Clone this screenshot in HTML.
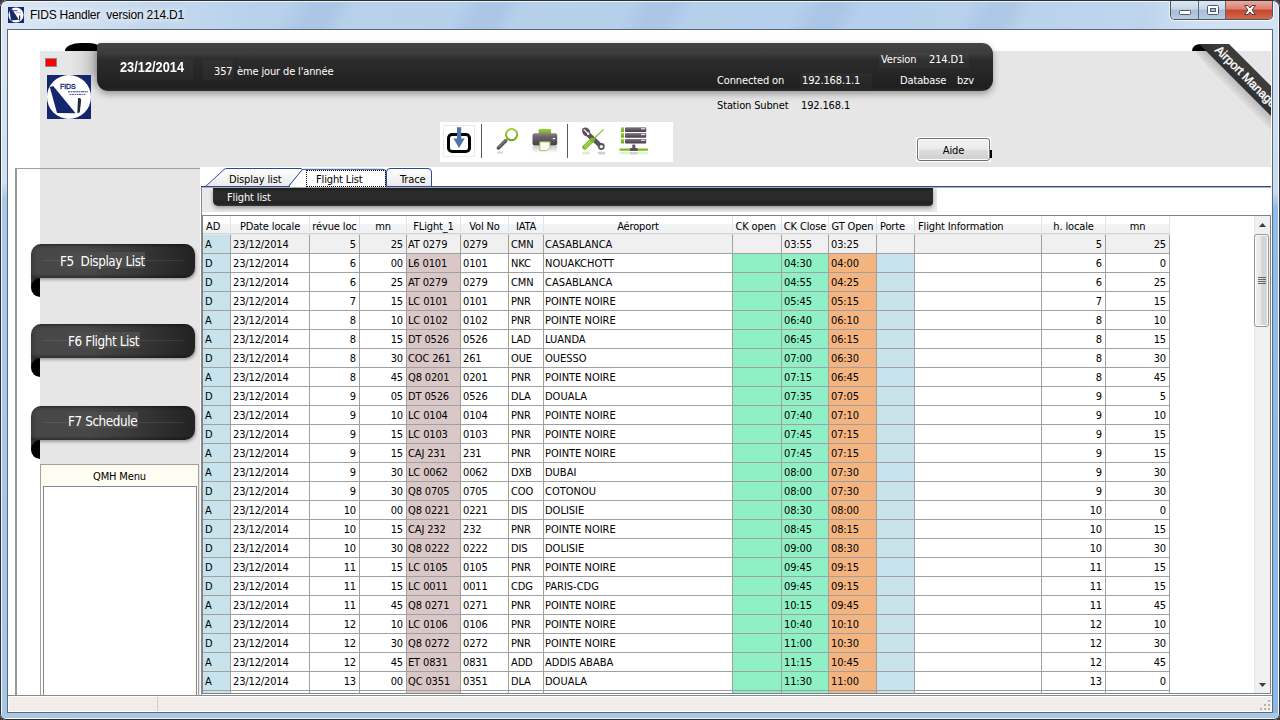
<!DOCTYPE html>
<html lang="fr"><head><meta charset="utf-8"><title>FIDS Handler version 214.D1</title>
<style>
*{box-sizing:border-box}
html,body{margin:0;padding:0}
body{width:1280px;height:720px;overflow:hidden;position:relative;background:#3a3a3a;
 font-family:"DejaVu Sans Condensed","Liberation Sans",sans-serif;font-size:11px;color:#000;letter-spacing:-.14px}
.abs{position:absolute}
/* window frame */
#frame{position:absolute;left:0;top:0;width:1280px;height:720px;border-radius:7px 7px 6px 6px;
 background:linear-gradient(90deg,#dbe7f4 0px,#c9dcf0 120px,#b7d1ec 260px,#b5d0ec 900px,#bed5ee 1140px,#d0e0f2 1200px,#d2e2f3 1280px);
 box-shadow:inset 0 0 0 1px #2b2f36, inset 0 0 0 2px rgba(255,255,255,.75)}
#tstreak{left:120px;top:2px;width:1050px;height:27px;background:repeating-linear-gradient(118deg,rgba(80,120,175,0) 0,rgba(80,120,175,.1) 22px,rgba(80,120,175,.1) 40px,rgba(80,120,175,0) 58px,rgba(80,120,175,0) 150px);-webkit-mask-image:linear-gradient(90deg,transparent 0,#000 12%,#000 85%,transparent 100%);mask-image:linear-gradient(90deg,transparent 0,#000 12%,#000 85%,transparent 100%)}
#frameL{left:2px;top:30px;width:5px;height:683px;background:linear-gradient(180deg,#d8e6f4 0,#d0e0f1 152px,#a9c9e8 168px,#a7c7e7 100%)}
#frameR{left:1273px;top:30px;width:5px;height:683px;background:linear-gradient(180deg,#cfe0f2 0,#cadcf0 162px,#90bcec 178px,#8ab8ea 100%)}
#frameB{left:2px;top:713px;width:1276px;height:5px;background:#a9c8e6}
#client{left:7px;top:29px;width:1266px;height:684px;background:#fff;border:1px solid #5c6874}
#title{left:30px;top:8px;letter-spacing:-.22px;font-family:"Liberation Sans",sans-serif;font-size:12px;line-height:15px;white-space:pre;color:#000;
 text-shadow:0 0 6px #fff,0 0 10px #fff}
/* caption buttons */
#capbtns{left:1170px;top:1px;width:103px;height:19px;border:1px solid #4a5560;border-top:none;border-radius:0 0 5px 5px;overflow:hidden;
 box-shadow:-1px 1px 0 rgba(255,255,255,.55),1px 1px 0 rgba(255,255,255,.55)}
#capbtns div{position:absolute;top:0;height:18px}
#bmin{left:0;width:28px;background:linear-gradient(180deg,#dde8f3 0,#c6d6e8 45%,#a9bdd6 50%,#b9cbe0 100%);border-right:1px solid #5c6874}
#bmax{left:28px;width:27px;background:linear-gradient(180deg,#dde8f3 0,#c6d6e8 45%,#a9bdd6 50%,#b9cbe0 100%);border-right:1px solid #5c6874}
#bclose{left:55px;width:47px;background:linear-gradient(180deg,#e9a99b 0,#d9816f 45%,#c8452c 50%,#d36a4b 100%)}
/* header */
#hpanel{left:40px;top:51px;width:1231px;height:116px;background:#e6e6e6}
#lpanelbg{left:40px;top:167px;width:160px;height:528px;background:#e6e6e6}
.blackbar{background:linear-gradient(180deg,#444 0,#3c3c3c 22%,#2c2c2c 34%,#272727 60%,#1f1f1f 94%,#2e2e2e 100%);color:#fff}
#hbar{left:97px;top:43px;width:896px;height:48px;border-radius:4px 11px 11px 11px;box-shadow:0 3px 7px rgba(0,0,0,.35)}
#hcurl{left:65px;top:43px;width:36px;height:8px;background:#000;border-radius:16px 12px 0 0 / 8px 6px 0 0}
#hcurlsh{left:70px;top:51px;width:27px;height:40px;background:linear-gradient(90deg,rgba(0,0,0,0) 0,rgba(0,0,0,.04) 40%,rgba(0,0,0,.2) 100%);-webkit-mask-image:linear-gradient(180deg,#000 0,#000 50%,transparent 100%)}
.lbl{position:absolute;white-space:pre;color:#fff;margin-top:1px}
.lblbg{background:rgba(255,255,255,.03)}
#redsq{left:45px;top:58px;width:12px;height:9px;background:#fe0000;border:1px solid #8a8a8a}
/* toolbar */
#tbar{left:440px;top:122px;width:233px;height:40px;background:#fff}
.tsep{position:absolute;top:124px;width:1px;height:34px;background:#5a5a5a}
/* Aide */
#aide{left:916px;top:137px;width:75px;height:25px;background:#fff}
#aidebtn{left:917px;top:138px;width:73px;height:23px;border:1px solid #707070;border-radius:3px;
 background:linear-gradient(180deg,#f2f2f2 0,#ebebeb 48%,#dddddd 52%,#cfcfcf 100%);box-shadow:inset 0 0 0 1px #fcfcfc;
 text-align:center;line-height:23px;font-size:11px}
/* nav buttons */
.nav{position:absolute;left:31px;width:164px;height:34px;border-radius:10px 10px 10px 0;
 background:linear-gradient(90deg,#3c3c3c 0,#474747 4%,#484848 35%,#3a3a3a 62%,#292929 88%,#222 100%);box-shadow:1px 2px 3px rgba(0,0,0,.3)}
.nav:before{content:"";position:absolute;left:0;top:0;right:0;bottom:0;border-radius:10px 10px 10px 0;background:linear-gradient(180deg,rgba(0,0,0,.4) 0,rgba(0,0,0,.08) 8%,rgba(0,0,0,0) 15%,rgba(0,0,0,0) 88%,rgba(0,0,0,.35) 100%)}
.navline{position:absolute;left:13px;right:10px;top:16px;height:1px;background:rgba(255,255,255,.09)}
.navcurlbg{position:absolute;left:31px;width:9px;height:10px;background:#3c3c3c}
.navcurl{position:absolute;left:31px;width:9px;height:19px;background:#000;border-radius:9px 0 0 9px / 9.5px 0 0 9.5px}
.navlbl{position:absolute;top:8px;height:16px;line-height:19px;background:#4c4c4c;color:#fff;font-size:13.4px;letter-spacing:-.42px;white-space:pre;padding:0 0 0 0}
/* QMH */
#qmh{left:40px;top:464px;width:159px;height:231px;background:#fffcf1;border:1px solid #a0a0a0;border-bottom:none}
#qmhlbl{left:41px;top:469.500px;width:157px;text-align:center;font-size:11px;line-height:14px}
#qmhlist{left:43px;top:486px;width:154px;height:209px;background:#fff;border:1px solid #828790;border-bottom:none}
/* tabs */
#tabline{left:201px;top:186px;width:1070px;height:1px;background:#2b4c9b}
#tabline2{left:201px;top:187px;width:1070px;height:1px;background:#b0b0b0}
#tableft{left:201px;top:187px;width:1px;height:508px;background:#8a8a8a}
#flpanel{left:202px;top:188px;width:735px;height:24px;background:#e9e9e9}
#flbar{left:213px;top:188px;width:720px;height:18px;border-radius:0 0 4px 5px;box-shadow:0 2px 4px rgba(0,0,0,.35);
 background:linear-gradient(180deg,#1c1c1c 0,#2b2b2b 20%,#2a2a2a 60%,#222 86%,#333 100%)}
/* grid */
.grid{position:absolute;left:203px;top:216px;width:1067px;height:477px;background:#fff;overflow:hidden}
#gridborder{left:202px;top:215px;width:1069px;height:479px;border:1px solid #7a838e}
.ghead{position:absolute;left:0;top:0;width:967px;height:18px;background:linear-gradient(180deg,#fff 0,#fff 45%,#f3f4f6 50%,#f0f1f3 100%);border-bottom:1px solid #d5d5d5}
.hc{position:absolute;top:0;height:18px;line-height:20px;white-space:nowrap;border-right:1px solid #e3e4e6;text-align:center;padding-top:1px}
.hc.hl{text-align:left;padding-left:3px}
.hc.hl2{text-align:left;padding-left:2.500px}
.row{position:absolute;left:0;width:967px;height:19px}
.row .c{position:absolute;top:0;height:20px;border:1px solid #a0a0a0;border-left:none;border-bottom:none;border-top:1px solid #a0a0a0;line-height:20px;padding:0 2px 0 2px;white-space:nowrap;overflow:hidden;background:#fff}
.row .c.ap{padding-left:1px;letter-spacing:0}
.row .c.r{text-align:right;padding-right:3px}
.row .cAD{background:#c9e3ed}
.row .cFL{background:#d9c8c7;padding-left:1px}
.row .cCK{background:#8ff0c6}
.row .cGT{background:#f4b47f}
.row .cPO{background:#c9e3ed}
.row.sel .c{background:#f0f0f0;border-top-color:#e6e6e6}
.row.sel .cAD{background:#c9e3ed}
/* scrollbar */
#sb{left:1254px;top:216px;width:16px;height:477px;background:#f0f0f0;border-left:1px solid #e8e8e8}
#sbthumb{left:1254px;top:234px;width:15px;height:93px;border:1px solid #979797;border-radius:3px;background:linear-gradient(90deg,#f3f3f3 0,#e6e6e6 45%,#d4d4d4 55%,#d8d8d8 100%);box-shadow:inset 0 0 0 1px #fbfbfb}
/* status */
#statline{left:8px;top:695px;width:1264px;height:1px;background:#8a8a8a}
#status{left:9px;top:697px;width:1262px;height:14px;background:#f0edeb}
#statsep{left:157px;top:697px;width:1px;height:14px;background:#d0cdcb}
/* ribbon */
#ribclip{left:1185px;top:40px;width:86px;height:90px;overflow:hidden}

</style></head>
<body>
<div id="frame"></div>
<div class="abs" id="tstreak"></div>
<div class="abs" id="frameL"></div><div class="abs" id="frameR"></div><div class="abs" id="frameB"></div>
<!-- title bar -->
<svg class="abs" style="left:8px;top:7px" width="16" height="16" viewBox="0 0 16 16">
 <rect width="16" height="16" fill="#16286f"/><circle cx="8" cy="8" r="7.6" fill="#fff"/>
 <path d="M1.5 3.2 L4 2 L10.8 12.8 L3 13.5 Z" fill="#16286f"/><rect x="11" y="8.5" width="1.2" height="5" fill="#333"/>
 <rect x="4.5" y="3" width="5" height="1.2" fill="#5a6aa8"/><rect x="8" y="5" width="5" height="1.4" fill="#c5cbe3"/>
</svg>
<div class="abs" id="title">FIDS Handler  version 214.D1</div>
<div class="abs" id="capbtns">
 <div id="bmin"><svg width="28" height="19"><rect x="8.500" y="9.500" width="11" height="4" rx="1" fill="#fff" stroke="#50596a"/></svg></div>
 <div id="bmax"><svg width="27" height="19"><rect x="8.500" y="4.500" width="11" height="9" rx="1" fill="#fff" stroke="#50596a"/><rect x="11.500" y="7.500" width="5" height="3" fill="#a9bdd6" stroke="#50596a"/></svg></div>
 <div id="bclose"><svg width="47" height="19"><path d="M18.500 4.500 L22 4.500 L24 7 L26 4.500 L29.500 4.500 L26 9 L29.500 13.500 L26 13.500 L24 11 L22 13.500 L18.500 13.500 L22 9 Z" fill="#fff" stroke="#4c3c48" stroke-width="1" stroke-linejoin="round"/></svg></div>
</div>
<div class="abs" id="client"></div>
<!-- header -->
<div class="abs" id="hpanel"></div>
<div class="abs" id="lpanelbg"></div>
<div class="abs" id="hcurlsh"></div>
<div class="abs" id="hcurl"></div>
<div class="abs blackbar" id="hbar"></div>
<div class="lbl lblbg" style="left:120px;top:58px;width:73px;height:21px"></div>
<div class="lbl" style="left:120px;top:57px;font:bold 15px/18px 'Liberation Sans',sans-serif;letter-spacing:0;transform:scaleX(.853);transform-origin:0 0" id="tdate">23/12/2014</div>
<div class="lbl lblbg" style="left:203px;top:59px;width:30px;height:20px"></div>
<div class="lbl" style="left:214px;top:64px;line-height:14px" id="tjour0">357</div>
<div class="lbl" style="left:237px;top:64px;line-height:14px" id="tjour">ème jour de l'année</div>
<div class="lbl lblbg" style="left:879px;top:52px;width:90px;height:15px"></div>
<div class="lbl" style="left:881px;top:52px;line-height:14px" id="tver">Version</div>
<div class="lbl" style="left:929px;top:52px;line-height:14px" id="tverv">214.D1</div>
<div class="lbl" style="left:717px;top:73px;line-height:14px" id="tcon">Connected on</div>
<div class="lbl lblbg" style="left:800px;top:72px;width:72px;height:16px"></div>
<div class="lbl" style="left:802px;top:73px;line-height:14px" id="tip">192.168.1.1</div>
<div class="lbl" style="left:900px;top:73px;line-height:14px" id="tdb">Database</div>
<div class="lbl" style="left:957px;top:73px;line-height:14px" id="tbzv">bzv</div>
<div class="lbl" style="left:717px;top:98px;line-height:14px;color:#000" id="tsub">Station Subnet</div>
<div class="lbl" style="left:801px;top:98px;line-height:14px;color:#000" id="tsubv">192.168.1</div>
<div class="abs" id="redsq"></div>
<!-- logo -->
<svg class="abs" style="left:47px;top:75px" width="44" height="44" viewBox="0 0 44 44">
 <rect width="44" height="44" fill="#13266e"/>
 <circle cx="22" cy="22" r="22" fill="#fff"/>
 <path d="M2.800 12 L6.200 10.900 L28.600 38.200 L10 37.900 Z" fill="#13266e"/>
 <path d="M31 23 Q34.200 22.600 34.200 25 L32.800 37.300 L30.300 38.300 Z" fill="#262b36"/>
 <text x="13" y="13.800" font-family="Liberation Sans,sans-serif" font-size="7" fill="#13266e" stroke="#13266e" stroke-width=".3" textLength="15.500" lengthAdjust="spacingAndGlyphs">FIDS</text>
 <path d="M21 16.800 H41" stroke="#2c3b80" stroke-width="1.100" stroke-dasharray="2.200 .5 1.400 .6 3 .5"/>
 <path d="M22.500 19.400 H38.500" stroke="#4a5796" stroke-width="1" stroke-dasharray="1.800 .5 2.600 .6 1.200 .5"/>
</svg>
<!-- toolbar -->
<div class="abs" id="tbar"></div>
<div class="tsep" style="left:481px"></div><div class="tsep" style="left:567px"></div>
<!--ICONS_START-->
<svg class="abs" style="left:440px;top:122px" width="233" height="40" viewBox="440 122 233 40">
 <defs>
  <linearGradient id="gG" x1="0" y1="0" x2="0" y2="1"><stop offset="0" stop-color="#9ad23a"/><stop offset="1" stop-color="#6aa516"/></linearGradient>
  <linearGradient id="gP" x1="0" y1="0" x2="0" y2="1"><stop offset="0" stop-color="#8d858f"/><stop offset=".25" stop-color="#6f6672"/><stop offset="1" stop-color="#463d49"/></linearGradient>
  <linearGradient id="gRf" x1="0" y1="0" x2="0" y2="1"><stop offset="0" stop-color="#8a8a8a" stop-opacity=".45"/><stop offset="1" stop-color="#8a8a8a" stop-opacity="0"/></linearGradient>
  <linearGradient id="gRg" x1="0" y1="0" x2="0" y2="1"><stop offset="0" stop-color="#8cc63f" stop-opacity=".45"/><stop offset="1" stop-color="#8cc63f" stop-opacity="0"/></linearGradient>
 </defs>
 <!-- download -->
 <rect x="443.500" y="125.500" width="31" height="31" fill="#fff" stroke="#ebebed"/>
 <rect x="448.500" y="134.500" width="21" height="17" rx="3.600" ry="3.600" fill="none" stroke="#000" stroke-width="3"/>
 <path d="M457 127.300 L461.200 127.300 L461.200 138.400 L464.600 138.400 L459.100 148 L453.400 138.400 L457 138.400 Z" fill="#4e73a7"/>
 <!-- magnifier -->
 <path d="M505.800 140.300 L507.600 138.200 L509 139.600 L506.900 141.300 Z" fill="#76b21d"/>
 <line x1="505.400" y1="140.900" x2="498.400" y2="147.900" stroke="#5b525e" stroke-width="3.600" stroke-linecap="round"/>
 <line x1="505.200" y1="140.500" x2="498.800" y2="146.900" stroke="#9a929c" stroke-width="1" stroke-linecap="round"/>
 <circle cx="511.600" cy="134.600" r="5.600" fill="#fff" stroke="url(#gG)" stroke-width="2"/>
 <ellipse cx="500" cy="152.600" rx="3.200" ry="1.300" fill="#999" opacity=".35"/>
 <!-- printer -->
 <rect x="538.600" y="129" width="12.500" height="5" rx="1" fill="url(#gG)"/>
 <rect x="532.500" y="133.200" width="24.700" height="12.200" rx="2.200" fill="url(#gP)"/>
 <rect x="552.800" y="138" width="2.300" height="1.200" fill="#fff"/>
 <rect x="532.500" y="146" width="24.700" height="7" fill="url(#gRf)"/>
 <path d="M539.900 141.900 L549.900 141.900 L549.900 147.600 L546.600 150.600 L539.900 150.600 Z" fill="#fff" stroke="#9ad04e" stroke-width="1"/>
 <!-- tools -->
 <line x1="589" y1="135" x2="601.400" y2="146.600" stroke="#5b525e" stroke-width="4.600" stroke-linecap="round"/>
 <circle cx="601.300" cy="146.500" r="3.400" fill="#5b525e"/>
 <circle cx="601.400" cy="146.600" r="1.600" fill="#fff"/>
 <path d="M582.600 128.200 Q586 126.600 588.800 129 Q591 131 590.300 134 L592.500 136.500 L589.500 139 L587 136.500 Q583.500 136 582.300 132.500 Q581.800 130 582.600 128.200 Z" fill="#5b525e"/>
 <path d="M583.800 129.400 L588.200 133.700" stroke="#fff" stroke-width="1.100"/>
 <circle cx="588.200" cy="133.800" r="1.200" fill="#fff"/>
 <line x1="603.300" y1="129.600" x2="592.500" y2="140" stroke="#86c22f" stroke-width="1.300" stroke-linecap="round"/>
 <line x1="592.400" y1="140.100" x2="584.600" y2="147.200" stroke="#7ab81c" stroke-width="4.800" stroke-linecap="round"/>
 <line x1="592" y1="139.200" x2="584" y2="146.500" stroke="#e9f6cf" stroke-width=".7"/>
 <line x1="593.200" y1="140.600" x2="585.200" y2="147.900" stroke="#e9f6cf" stroke-width=".7"/>
 <circle cx="592" cy="140" r="2.300" fill="#7ab81c"/>
 <ellipse cx="586" cy="153" rx="4" ry="1.500" fill="#8cc63f" opacity=".3"/>
 <ellipse cx="601.500" cy="153" rx="4" ry="1.500" fill="#777" opacity=".35"/>
 <!-- server -->
 <g>
  <rect x="620.900" y="127.300" width="3.200" height="4.700" rx=".8" fill="url(#gG)"/><rect x="625" y="127.300" width="21.200" height="4.700" rx=".8" fill="url(#gP)"/><rect x="641" y="128.200" width="4" height="1.100" fill="#e8e6e9"/>
  <rect x="620.900" y="133.100" width="3.200" height="4.700" rx=".8" fill="url(#gG)"/><rect x="625" y="133.100" width="21.200" height="4.700" rx=".8" fill="url(#gP)"/><rect x="641" y="134" width="4" height="1.100" fill="#e8e6e9"/>
  <rect x="620.900" y="138.900" width="3.200" height="4.700" rx=".8" fill="url(#gG)"/><rect x="625" y="138.900" width="21.200" height="4.700" rx=".8" fill="url(#gP)"/><rect x="641" y="139.800" width="4" height="1.100" fill="#e8e6e9"/>
  <rect x="632.300" y="144.600" width="3" height="4" fill="#5b525e"/>
  <rect x="619.400" y="148.400" width="28.800" height="2.400" rx="1.200" fill="#7ab81c"/>
  <rect x="630" y="148" width="7.600" height="3" rx=".6" fill="#5b525e"/>
  <rect x="619.400" y="152.500" width="28.800" height="2.300" rx="1" fill="url(#gRg)"/>
  <rect x="630" y="152.500" width="7.600" height="3" fill="url(#gRf)"/>
 </g>
</svg>
<!--ICONS_END-->
<!-- aide -->
<div class="abs" id="aide"></div>
<div class="abs" id="aidebtn">Aide</div>
<div class="abs" style="left:990px;top:150px;width:1.500px;height:8px;background:#000"></div>
<!-- ribbon -->
<svg class="abs" style="left:1185px;top:40px" width="86" height="90" viewBox="0 0 86 90">
 <defs>
  <linearGradient id="rg" x1="0" y1="1" x2="1" y2="0" gradientUnits="objectBoundingBox"><stop offset="0.3" stop-color="#1a1a1a"/><stop offset="0.62" stop-color="#3c3c3c"/></linearGradient>
  <linearGradient id="rs" gradientUnits="userSpaceOnUse" x1="40" y1="30" x2="32" y2="38"><stop offset="0" stop-color="#000" stop-opacity=".2"/><stop offset="1" stop-color="#000" stop-opacity="0"/></linearGradient>
 </defs>
 <path d="M7 11 Q7.500 4 16 4 L24 4 L24 11 Z" fill="#000"/>
 <polygon points="21,11 86,76 86,90 72,90 10,11" fill="url(#rs)"/>
 <polygon points="14,4 44,4 86,46 86,76" fill="url(#rg)"/>
 <text transform="translate(29.3,10.7) rotate(45)" font-family="Liberation Sans,sans-serif" font-size="12.2" fill="#fff" stroke="#fff" stroke-width=".35" id="ribtxt">Airport Manager</text>
</svg>
<!-- left panel -->
<div class="abs" style="left:15px;top:168px;width:185px;height:1px;background:#a0a0a0"></div>
<div class="abs" style="left:15px;top:168px;width:2px;height:527px;background:#9a9a9a"></div>
<div class="navcurlbg" style="top:277px"></div><div class="navcurl" style="top:278px"></div>
<div class="nav" style="top:244px"><div class="navline"></div><div class="navlbl" style="left:29px;width:85px" id="n1">F5  Display List</div></div>
<div class="navcurlbg" style="top:357px"></div><div class="navcurl" style="top:358px"></div>
<div class="nav" style="top:324px"><div class="navline"></div><div class="navlbl" style="left:37px;width:72px" id="n2">F6 Flight List</div></div>
<div class="navcurlbg" style="top:439px"></div><div class="navcurl" style="top:440px"></div>
<div class="nav" style="top:406px"><div class="navline"></div><div class="navlbl" style="left:37px;width:70px;top:6px" id="n3">F7 Schedule</div></div>
<div class="abs" id="qmh"></div>
<div class="abs" id="qmhlbl">QMH Menu</div>
<div class="abs" id="qmhlist"></div>
<!-- tabs -->
<svg class="abs" style="left:200px;top:166px" width="240" height="22" viewBox="0 0 240 22">
 <defs><linearGradient id="tg" x1="0" y1="0" x2="0" y2="1"><stop offset="0" stop-color="#fff"/><stop offset="1" stop-color="#e9e9e9"/></linearGradient></defs>
 <path d="M5.5 20.5 L24 3.500 Q25 2.500 27 2.500 L100 2.500 Q103.500 2.500 102 4.600 L88.500 20.500 Z" fill="url(#tg)" stroke="#2b4c9b" stroke-width="1"/>
 <path d="M88.500 20.500 L101 5 Q102.500 3.300 105 3.300 L183 3.300 Q186 3.300 186 6 L186 20.500 Z" fill="#fff" stroke="#2b4c9b" stroke-width="1"/>
 <path d="M186.500 20.5 L186.500 6 Q186.5 2.5 190 2.5 L228 2.500 Q231.5 2.5 231.5 6 L231.500 20.5 Z" fill="url(#tg)" stroke="#2b4c9b" stroke-width="1"/>
</svg>
<div class="abs" style="left:229px;top:173px;line-height:14px" id="tab1">Display list</div>
<div class="abs" style="left:316px;top:173px;line-height:14px" id="tab2">Flight List</div>
<div class="abs" style="left:400px;top:173px;line-height:14px" id="tab3">Trace</div>
<div class="abs" id="tabline"></div><div class="abs" id="tabline2"></div><div class="abs" id="tableft"></div>
<div class="abs" style="left:290px;top:186px;width:96px;height:1px;background:#fff"></div>
<div class="abs" style="left:306px;top:170px;width:80px;height:17px;border:1px dotted #000"></div>
<div class="abs" id="flpanel"></div>
<div class="abs" id="flbar"></div>
<div class="lbl" style="left:227px;top:190px;line-height:14px" id="tfl">Flight list</div>
<!-- grid -->
<div class="abs" id="gridborder"></div>
<div class="grid">
<div class="ghead">
<div class="hc hl" style="left:0px;width:28px"><span>AD</span></div>
<div class="hc hc" style="left:28px;width:79px"><span>PDate locale</span></div>
<div class="hc hc" style="left:107px;width:50px"><span>révue loc</span></div>
<div class="hc hc" style="left:157px;width:47px"><span>mn</span></div>
<div class="hc hc" style="left:204px;width:54px"><span>FLight_1</span></div>
<div class="hc hc" style="left:258px;width:48px"><span>Vol No</span></div>
<div class="hc hc" style="left:306px;width:35px"><span>IATA</span></div>
<div class="hc hc" style="left:341px;width:189px"><span>Aéroport</span></div>
<div class="hc hl2" style="left:530px;width:49px"><span>CK open</span></div>
<div class="hc hc" style="left:579px;width:47px"><span>CK Close</span></div>
<div class="hc hc" style="left:626px;width:48px"><span>GT Open</span></div>
<div class="hc hl" style="left:674px;width:38px"><span>Porte</span></div>
<div class="hc hl" style="left:712px;width:127px"><span>Flight Information</span></div>
<div class="hc hc" style="left:839px;width:64px"><span>h. locale</span></div>
<div class="hc hc" style="left:903px;width:64px"><span>mn</span></div>
</div>
<div class="row sel" style="top:18px">
<div class="c cAD" style="left:0px;width:28px">A</div>
<div class="c " style="left:28px;width:79px">23/12/2014</div>
<div class="c r" style="left:107px;width:50px">5</div>
<div class="c r" style="left:157px;width:47px">25</div>
<div class="c cFL" style="left:204px;width:54px">AT 0279</div>
<div class="c " style="left:258px;width:48px">0279</div>
<div class="c " style="left:306px;width:35px">CMN</div>
<div class="c ap" style="left:341px;width:189px">CASABLANCA</div>
<div class="c cCK" style="left:530px;width:49px"></div>
<div class="c cCK" style="left:579px;width:47px">03:55</div>
<div class="c cGT" style="left:626px;width:48px">03:25</div>
<div class="c cPO" style="left:674px;width:38px"></div>
<div class="c " style="left:712px;width:127px"></div>
<div class="c r" style="left:839px;width:64px">5</div>
<div class="c r" style="left:903px;width:64px">25</div>
</div>
<div class="row" style="top:37px">
<div class="c cAD" style="left:0px;width:28px">D</div>
<div class="c " style="left:28px;width:79px">23/12/2014</div>
<div class="c r" style="left:107px;width:50px">6</div>
<div class="c r" style="left:157px;width:47px">00</div>
<div class="c cFL" style="left:204px;width:54px">L6 0101</div>
<div class="c " style="left:258px;width:48px">0101</div>
<div class="c " style="left:306px;width:35px">NKC</div>
<div class="c ap" style="left:341px;width:189px">NOUAKCHOTT</div>
<div class="c cCK" style="left:530px;width:49px"></div>
<div class="c cCK" style="left:579px;width:47px">04:30</div>
<div class="c cGT" style="left:626px;width:48px">04:00</div>
<div class="c cPO" style="left:674px;width:38px"></div>
<div class="c " style="left:712px;width:127px"></div>
<div class="c r" style="left:839px;width:64px">6</div>
<div class="c r" style="left:903px;width:64px">0</div>
</div>
<div class="row" style="top:56px">
<div class="c cAD" style="left:0px;width:28px">D</div>
<div class="c " style="left:28px;width:79px">23/12/2014</div>
<div class="c r" style="left:107px;width:50px">6</div>
<div class="c r" style="left:157px;width:47px">25</div>
<div class="c cFL" style="left:204px;width:54px">AT 0279</div>
<div class="c " style="left:258px;width:48px">0279</div>
<div class="c " style="left:306px;width:35px">CMN</div>
<div class="c ap" style="left:341px;width:189px">CASABLANCA</div>
<div class="c cCK" style="left:530px;width:49px"></div>
<div class="c cCK" style="left:579px;width:47px">04:55</div>
<div class="c cGT" style="left:626px;width:48px">04:25</div>
<div class="c cPO" style="left:674px;width:38px"></div>
<div class="c " style="left:712px;width:127px"></div>
<div class="c r" style="left:839px;width:64px">6</div>
<div class="c r" style="left:903px;width:64px">25</div>
</div>
<div class="row" style="top:75px">
<div class="c cAD" style="left:0px;width:28px">D</div>
<div class="c " style="left:28px;width:79px">23/12/2014</div>
<div class="c r" style="left:107px;width:50px">7</div>
<div class="c r" style="left:157px;width:47px">15</div>
<div class="c cFL" style="left:204px;width:54px">LC 0101</div>
<div class="c " style="left:258px;width:48px">0101</div>
<div class="c " style="left:306px;width:35px">PNR</div>
<div class="c ap" style="left:341px;width:189px">POINTE NOIRE</div>
<div class="c cCK" style="left:530px;width:49px"></div>
<div class="c cCK" style="left:579px;width:47px">05:45</div>
<div class="c cGT" style="left:626px;width:48px">05:15</div>
<div class="c cPO" style="left:674px;width:38px"></div>
<div class="c " style="left:712px;width:127px"></div>
<div class="c r" style="left:839px;width:64px">7</div>
<div class="c r" style="left:903px;width:64px">15</div>
</div>
<div class="row" style="top:94px">
<div class="c cAD" style="left:0px;width:28px">A</div>
<div class="c " style="left:28px;width:79px">23/12/2014</div>
<div class="c r" style="left:107px;width:50px">8</div>
<div class="c r" style="left:157px;width:47px">10</div>
<div class="c cFL" style="left:204px;width:54px">LC 0102</div>
<div class="c " style="left:258px;width:48px">0102</div>
<div class="c " style="left:306px;width:35px">PNR</div>
<div class="c ap" style="left:341px;width:189px">POINTE NOIRE</div>
<div class="c cCK" style="left:530px;width:49px"></div>
<div class="c cCK" style="left:579px;width:47px">06:40</div>
<div class="c cGT" style="left:626px;width:48px">06:10</div>
<div class="c cPO" style="left:674px;width:38px"></div>
<div class="c " style="left:712px;width:127px"></div>
<div class="c r" style="left:839px;width:64px">8</div>
<div class="c r" style="left:903px;width:64px">10</div>
</div>
<div class="row" style="top:113px">
<div class="c cAD" style="left:0px;width:28px">A</div>
<div class="c " style="left:28px;width:79px">23/12/2014</div>
<div class="c r" style="left:107px;width:50px">8</div>
<div class="c r" style="left:157px;width:47px">15</div>
<div class="c cFL" style="left:204px;width:54px">DT 0526</div>
<div class="c " style="left:258px;width:48px">0526</div>
<div class="c " style="left:306px;width:35px">LAD</div>
<div class="c ap" style="left:341px;width:189px">LUANDA</div>
<div class="c cCK" style="left:530px;width:49px"></div>
<div class="c cCK" style="left:579px;width:47px">06:45</div>
<div class="c cGT" style="left:626px;width:48px">06:15</div>
<div class="c cPO" style="left:674px;width:38px"></div>
<div class="c " style="left:712px;width:127px"></div>
<div class="c r" style="left:839px;width:64px">8</div>
<div class="c r" style="left:903px;width:64px">15</div>
</div>
<div class="row" style="top:132px">
<div class="c cAD" style="left:0px;width:28px">D</div>
<div class="c " style="left:28px;width:79px">23/12/2014</div>
<div class="c r" style="left:107px;width:50px">8</div>
<div class="c r" style="left:157px;width:47px">30</div>
<div class="c cFL" style="left:204px;width:54px">COC 261</div>
<div class="c " style="left:258px;width:48px">261</div>
<div class="c " style="left:306px;width:35px">OUE</div>
<div class="c ap" style="left:341px;width:189px">OUESSO</div>
<div class="c cCK" style="left:530px;width:49px"></div>
<div class="c cCK" style="left:579px;width:47px">07:00</div>
<div class="c cGT" style="left:626px;width:48px">06:30</div>
<div class="c cPO" style="left:674px;width:38px"></div>
<div class="c " style="left:712px;width:127px"></div>
<div class="c r" style="left:839px;width:64px">8</div>
<div class="c r" style="left:903px;width:64px">30</div>
</div>
<div class="row" style="top:151px">
<div class="c cAD" style="left:0px;width:28px">A</div>
<div class="c " style="left:28px;width:79px">23/12/2014</div>
<div class="c r" style="left:107px;width:50px">8</div>
<div class="c r" style="left:157px;width:47px">45</div>
<div class="c cFL" style="left:204px;width:54px">Q8 0201</div>
<div class="c " style="left:258px;width:48px">0201</div>
<div class="c " style="left:306px;width:35px">PNR</div>
<div class="c ap" style="left:341px;width:189px">POINTE NOIRE</div>
<div class="c cCK" style="left:530px;width:49px"></div>
<div class="c cCK" style="left:579px;width:47px">07:15</div>
<div class="c cGT" style="left:626px;width:48px">06:45</div>
<div class="c cPO" style="left:674px;width:38px"></div>
<div class="c " style="left:712px;width:127px"></div>
<div class="c r" style="left:839px;width:64px">8</div>
<div class="c r" style="left:903px;width:64px">45</div>
</div>
<div class="row" style="top:170px">
<div class="c cAD" style="left:0px;width:28px">D</div>
<div class="c " style="left:28px;width:79px">23/12/2014</div>
<div class="c r" style="left:107px;width:50px">9</div>
<div class="c r" style="left:157px;width:47px">05</div>
<div class="c cFL" style="left:204px;width:54px">DT 0526</div>
<div class="c " style="left:258px;width:48px">0526</div>
<div class="c " style="left:306px;width:35px">DLA</div>
<div class="c ap" style="left:341px;width:189px">DOUALA</div>
<div class="c cCK" style="left:530px;width:49px"></div>
<div class="c cCK" style="left:579px;width:47px">07:35</div>
<div class="c cGT" style="left:626px;width:48px">07:05</div>
<div class="c cPO" style="left:674px;width:38px"></div>
<div class="c " style="left:712px;width:127px"></div>
<div class="c r" style="left:839px;width:64px">9</div>
<div class="c r" style="left:903px;width:64px">5</div>
</div>
<div class="row" style="top:189px">
<div class="c cAD" style="left:0px;width:28px">A</div>
<div class="c " style="left:28px;width:79px">23/12/2014</div>
<div class="c r" style="left:107px;width:50px">9</div>
<div class="c r" style="left:157px;width:47px">10</div>
<div class="c cFL" style="left:204px;width:54px">LC 0104</div>
<div class="c " style="left:258px;width:48px">0104</div>
<div class="c " style="left:306px;width:35px">PNR</div>
<div class="c ap" style="left:341px;width:189px">POINTE NOIRE</div>
<div class="c cCK" style="left:530px;width:49px"></div>
<div class="c cCK" style="left:579px;width:47px">07:40</div>
<div class="c cGT" style="left:626px;width:48px">07:10</div>
<div class="c cPO" style="left:674px;width:38px"></div>
<div class="c " style="left:712px;width:127px"></div>
<div class="c r" style="left:839px;width:64px">9</div>
<div class="c r" style="left:903px;width:64px">10</div>
</div>
<div class="row" style="top:208px">
<div class="c cAD" style="left:0px;width:28px">D</div>
<div class="c " style="left:28px;width:79px">23/12/2014</div>
<div class="c r" style="left:107px;width:50px">9</div>
<div class="c r" style="left:157px;width:47px">15</div>
<div class="c cFL" style="left:204px;width:54px">LC 0103</div>
<div class="c " style="left:258px;width:48px">0103</div>
<div class="c " style="left:306px;width:35px">PNR</div>
<div class="c ap" style="left:341px;width:189px">POINTE NOIRE</div>
<div class="c cCK" style="left:530px;width:49px"></div>
<div class="c cCK" style="left:579px;width:47px">07:45</div>
<div class="c cGT" style="left:626px;width:48px">07:15</div>
<div class="c cPO" style="left:674px;width:38px"></div>
<div class="c " style="left:712px;width:127px"></div>
<div class="c r" style="left:839px;width:64px">9</div>
<div class="c r" style="left:903px;width:64px">15</div>
</div>
<div class="row" style="top:227px">
<div class="c cAD" style="left:0px;width:28px">A</div>
<div class="c " style="left:28px;width:79px">23/12/2014</div>
<div class="c r" style="left:107px;width:50px">9</div>
<div class="c r" style="left:157px;width:47px">15</div>
<div class="c cFL" style="left:204px;width:54px">CAJ 231</div>
<div class="c " style="left:258px;width:48px">231</div>
<div class="c " style="left:306px;width:35px">PNR</div>
<div class="c ap" style="left:341px;width:189px">POINTE NOIRE</div>
<div class="c cCK" style="left:530px;width:49px"></div>
<div class="c cCK" style="left:579px;width:47px">07:45</div>
<div class="c cGT" style="left:626px;width:48px">07:15</div>
<div class="c cPO" style="left:674px;width:38px"></div>
<div class="c " style="left:712px;width:127px"></div>
<div class="c r" style="left:839px;width:64px">9</div>
<div class="c r" style="left:903px;width:64px">15</div>
</div>
<div class="row" style="top:246px">
<div class="c cAD" style="left:0px;width:28px">A</div>
<div class="c " style="left:28px;width:79px">23/12/2014</div>
<div class="c r" style="left:107px;width:50px">9</div>
<div class="c r" style="left:157px;width:47px">30</div>
<div class="c cFL" style="left:204px;width:54px">LC 0062</div>
<div class="c " style="left:258px;width:48px">0062</div>
<div class="c " style="left:306px;width:35px">DXB</div>
<div class="c ap" style="left:341px;width:189px">DUBAI</div>
<div class="c cCK" style="left:530px;width:49px"></div>
<div class="c cCK" style="left:579px;width:47px">08:00</div>
<div class="c cGT" style="left:626px;width:48px">07:30</div>
<div class="c cPO" style="left:674px;width:38px"></div>
<div class="c " style="left:712px;width:127px"></div>
<div class="c r" style="left:839px;width:64px">9</div>
<div class="c r" style="left:903px;width:64px">30</div>
</div>
<div class="row" style="top:265px">
<div class="c cAD" style="left:0px;width:28px">D</div>
<div class="c " style="left:28px;width:79px">23/12/2014</div>
<div class="c r" style="left:107px;width:50px">9</div>
<div class="c r" style="left:157px;width:47px">30</div>
<div class="c cFL" style="left:204px;width:54px">Q8 0705</div>
<div class="c " style="left:258px;width:48px">0705</div>
<div class="c " style="left:306px;width:35px">COO</div>
<div class="c ap" style="left:341px;width:189px">COTONOU</div>
<div class="c cCK" style="left:530px;width:49px"></div>
<div class="c cCK" style="left:579px;width:47px">08:00</div>
<div class="c cGT" style="left:626px;width:48px">07:30</div>
<div class="c cPO" style="left:674px;width:38px"></div>
<div class="c " style="left:712px;width:127px"></div>
<div class="c r" style="left:839px;width:64px">9</div>
<div class="c r" style="left:903px;width:64px">30</div>
</div>
<div class="row" style="top:284px">
<div class="c cAD" style="left:0px;width:28px">A</div>
<div class="c " style="left:28px;width:79px">23/12/2014</div>
<div class="c r" style="left:107px;width:50px">10</div>
<div class="c r" style="left:157px;width:47px">00</div>
<div class="c cFL" style="left:204px;width:54px">Q8 0221</div>
<div class="c " style="left:258px;width:48px">0221</div>
<div class="c " style="left:306px;width:35px">DIS</div>
<div class="c ap" style="left:341px;width:189px">DOLISIE</div>
<div class="c cCK" style="left:530px;width:49px"></div>
<div class="c cCK" style="left:579px;width:47px">08:30</div>
<div class="c cGT" style="left:626px;width:48px">08:00</div>
<div class="c cPO" style="left:674px;width:38px"></div>
<div class="c " style="left:712px;width:127px"></div>
<div class="c r" style="left:839px;width:64px">10</div>
<div class="c r" style="left:903px;width:64px">0</div>
</div>
<div class="row" style="top:303px">
<div class="c cAD" style="left:0px;width:28px">D</div>
<div class="c " style="left:28px;width:79px">23/12/2014</div>
<div class="c r" style="left:107px;width:50px">10</div>
<div class="c r" style="left:157px;width:47px">15</div>
<div class="c cFL" style="left:204px;width:54px">CAJ 232</div>
<div class="c " style="left:258px;width:48px">232</div>
<div class="c " style="left:306px;width:35px">PNR</div>
<div class="c ap" style="left:341px;width:189px">POINTE NOIRE</div>
<div class="c cCK" style="left:530px;width:49px"></div>
<div class="c cCK" style="left:579px;width:47px">08:45</div>
<div class="c cGT" style="left:626px;width:48px">08:15</div>
<div class="c cPO" style="left:674px;width:38px"></div>
<div class="c " style="left:712px;width:127px"></div>
<div class="c r" style="left:839px;width:64px">10</div>
<div class="c r" style="left:903px;width:64px">15</div>
</div>
<div class="row" style="top:322px">
<div class="c cAD" style="left:0px;width:28px">D</div>
<div class="c " style="left:28px;width:79px">23/12/2014</div>
<div class="c r" style="left:107px;width:50px">10</div>
<div class="c r" style="left:157px;width:47px">30</div>
<div class="c cFL" style="left:204px;width:54px">Q8 0222</div>
<div class="c " style="left:258px;width:48px">0222</div>
<div class="c " style="left:306px;width:35px">DIS</div>
<div class="c ap" style="left:341px;width:189px">DOLISIE</div>
<div class="c cCK" style="left:530px;width:49px"></div>
<div class="c cCK" style="left:579px;width:47px">09:00</div>
<div class="c cGT" style="left:626px;width:48px">08:30</div>
<div class="c cPO" style="left:674px;width:38px"></div>
<div class="c " style="left:712px;width:127px"></div>
<div class="c r" style="left:839px;width:64px">10</div>
<div class="c r" style="left:903px;width:64px">30</div>
</div>
<div class="row" style="top:341px">
<div class="c cAD" style="left:0px;width:28px">D</div>
<div class="c " style="left:28px;width:79px">23/12/2014</div>
<div class="c r" style="left:107px;width:50px">11</div>
<div class="c r" style="left:157px;width:47px">15</div>
<div class="c cFL" style="left:204px;width:54px">LC 0105</div>
<div class="c " style="left:258px;width:48px">0105</div>
<div class="c " style="left:306px;width:35px">PNR</div>
<div class="c ap" style="left:341px;width:189px">POINTE NOIRE</div>
<div class="c cCK" style="left:530px;width:49px"></div>
<div class="c cCK" style="left:579px;width:47px">09:45</div>
<div class="c cGT" style="left:626px;width:48px">09:15</div>
<div class="c cPO" style="left:674px;width:38px"></div>
<div class="c " style="left:712px;width:127px"></div>
<div class="c r" style="left:839px;width:64px">11</div>
<div class="c r" style="left:903px;width:64px">15</div>
</div>
<div class="row" style="top:360px">
<div class="c cAD" style="left:0px;width:28px">D</div>
<div class="c " style="left:28px;width:79px">23/12/2014</div>
<div class="c r" style="left:107px;width:50px">11</div>
<div class="c r" style="left:157px;width:47px">15</div>
<div class="c cFL" style="left:204px;width:54px">LC 0011</div>
<div class="c " style="left:258px;width:48px">0011</div>
<div class="c " style="left:306px;width:35px">CDG</div>
<div class="c ap" style="left:341px;width:189px">PARIS-CDG</div>
<div class="c cCK" style="left:530px;width:49px"></div>
<div class="c cCK" style="left:579px;width:47px">09:45</div>
<div class="c cGT" style="left:626px;width:48px">09:15</div>
<div class="c cPO" style="left:674px;width:38px"></div>
<div class="c " style="left:712px;width:127px"></div>
<div class="c r" style="left:839px;width:64px">11</div>
<div class="c r" style="left:903px;width:64px">15</div>
</div>
<div class="row" style="top:379px">
<div class="c cAD" style="left:0px;width:28px">A</div>
<div class="c " style="left:28px;width:79px">23/12/2014</div>
<div class="c r" style="left:107px;width:50px">11</div>
<div class="c r" style="left:157px;width:47px">45</div>
<div class="c cFL" style="left:204px;width:54px">Q8 0271</div>
<div class="c " style="left:258px;width:48px">0271</div>
<div class="c " style="left:306px;width:35px">PNR</div>
<div class="c ap" style="left:341px;width:189px">POINTE NOIRE</div>
<div class="c cCK" style="left:530px;width:49px"></div>
<div class="c cCK" style="left:579px;width:47px">10:15</div>
<div class="c cGT" style="left:626px;width:48px">09:45</div>
<div class="c cPO" style="left:674px;width:38px"></div>
<div class="c " style="left:712px;width:127px"></div>
<div class="c r" style="left:839px;width:64px">11</div>
<div class="c r" style="left:903px;width:64px">45</div>
</div>
<div class="row" style="top:398px">
<div class="c cAD" style="left:0px;width:28px">A</div>
<div class="c " style="left:28px;width:79px">23/12/2014</div>
<div class="c r" style="left:107px;width:50px">12</div>
<div class="c r" style="left:157px;width:47px">10</div>
<div class="c cFL" style="left:204px;width:54px">LC 0106</div>
<div class="c " style="left:258px;width:48px">0106</div>
<div class="c " style="left:306px;width:35px">PNR</div>
<div class="c ap" style="left:341px;width:189px">POINTE NOIRE</div>
<div class="c cCK" style="left:530px;width:49px"></div>
<div class="c cCK" style="left:579px;width:47px">10:40</div>
<div class="c cGT" style="left:626px;width:48px">10:10</div>
<div class="c cPO" style="left:674px;width:38px"></div>
<div class="c " style="left:712px;width:127px"></div>
<div class="c r" style="left:839px;width:64px">12</div>
<div class="c r" style="left:903px;width:64px">10</div>
</div>
<div class="row" style="top:417px">
<div class="c cAD" style="left:0px;width:28px">D</div>
<div class="c " style="left:28px;width:79px">23/12/2014</div>
<div class="c r" style="left:107px;width:50px">12</div>
<div class="c r" style="left:157px;width:47px">30</div>
<div class="c cFL" style="left:204px;width:54px">Q8 0272</div>
<div class="c " style="left:258px;width:48px">0272</div>
<div class="c " style="left:306px;width:35px">PNR</div>
<div class="c ap" style="left:341px;width:189px">POINTE NOIRE</div>
<div class="c cCK" style="left:530px;width:49px"></div>
<div class="c cCK" style="left:579px;width:47px">11:00</div>
<div class="c cGT" style="left:626px;width:48px">10:30</div>
<div class="c cPO" style="left:674px;width:38px"></div>
<div class="c " style="left:712px;width:127px"></div>
<div class="c r" style="left:839px;width:64px">12</div>
<div class="c r" style="left:903px;width:64px">30</div>
</div>
<div class="row" style="top:436px">
<div class="c cAD" style="left:0px;width:28px">A</div>
<div class="c " style="left:28px;width:79px">23/12/2014</div>
<div class="c r" style="left:107px;width:50px">12</div>
<div class="c r" style="left:157px;width:47px">45</div>
<div class="c cFL" style="left:204px;width:54px">ET 0831</div>
<div class="c " style="left:258px;width:48px">0831</div>
<div class="c " style="left:306px;width:35px">ADD</div>
<div class="c ap" style="left:341px;width:189px">ADDIS ABABA</div>
<div class="c cCK" style="left:530px;width:49px"></div>
<div class="c cCK" style="left:579px;width:47px">11:15</div>
<div class="c cGT" style="left:626px;width:48px">10:45</div>
<div class="c cPO" style="left:674px;width:38px"></div>
<div class="c " style="left:712px;width:127px"></div>
<div class="c r" style="left:839px;width:64px">12</div>
<div class="c r" style="left:903px;width:64px">45</div>
</div>
<div class="row" style="top:455px">
<div class="c cAD" style="left:0px;width:28px">A</div>
<div class="c " style="left:28px;width:79px">23/12/2014</div>
<div class="c r" style="left:107px;width:50px">13</div>
<div class="c r" style="left:157px;width:47px">00</div>
<div class="c cFL" style="left:204px;width:54px">QC 0351</div>
<div class="c " style="left:258px;width:48px">0351</div>
<div class="c " style="left:306px;width:35px">DLA</div>
<div class="c ap" style="left:341px;width:189px">DOUALA</div>
<div class="c cCK" style="left:530px;width:49px"></div>
<div class="c cCK" style="left:579px;width:47px">11:30</div>
<div class="c cGT" style="left:626px;width:48px">11:00</div>
<div class="c cPO" style="left:674px;width:38px"></div>
<div class="c " style="left:712px;width:127px"></div>
<div class="c r" style="left:839px;width:64px">13</div>
<div class="c r" style="left:903px;width:64px">0</div>
</div>
<div class="row" style="top:474px">
<div class="c cAD" style="left:0px;width:28px"></div>
<div class="c " style="left:28px;width:79px"></div>
<div class="c r" style="left:107px;width:50px"></div>
<div class="c r" style="left:157px;width:47px"></div>
<div class="c cFL" style="left:204px;width:54px"></div>
<div class="c " style="left:258px;width:48px"></div>
<div class="c " style="left:306px;width:35px"></div>
<div class="c ap" style="left:341px;width:189px"></div>
<div class="c cCK" style="left:530px;width:49px"></div>
<div class="c cCK" style="left:579px;width:47px"></div>
<div class="c cGT" style="left:626px;width:48px"></div>
<div class="c cPO" style="left:674px;width:38px"></div>
<div class="c " style="left:712px;width:127px"></div>
<div class="c r" style="left:839px;width:64px"></div>
<div class="c r" style="left:903px;width:64px"></div>
</div>
</div>
<div class="abs" id="sb"></div>
<svg class="abs" style="left:1254px;top:215px" width="16" height="479"><path d="M5 12 L8.500 8 L12 12 Z" fill="#3c3c3c"/><path d="M5 468 L8.500 472 L12 468 Z" fill="#3c3c3c"/></svg>
<div class="abs" id="sbthumb"></div>
<svg class="abs" style="left:1258px;top:277px" width="8" height="8"><path d="M0 .5H8M0 2.500H8M0 4.500H8M0 6.500H8" stroke="#666" stroke-width="1" stroke-dasharray="8 0"/></svg>
<!-- status -->
<div class="abs" id="statline"></div>
<div class="abs" id="status"></div>
<div class="abs" id="statsep"></div>
<svg class="abs" style="left:1259px;top:699px" width="12" height="12"><g fill="#b8b4b0"><rect x="9" y="1" width="2" height="2"/><rect x="5" y="5" width="2" height="2"/><rect x="9" y="5" width="2" height="2"/><rect x="1" y="9" width="2" height="2"/><rect x="5" y="9" width="2" height="2"/><rect x="9" y="9" width="2" height="2"/></g></svg>

</body></html>
